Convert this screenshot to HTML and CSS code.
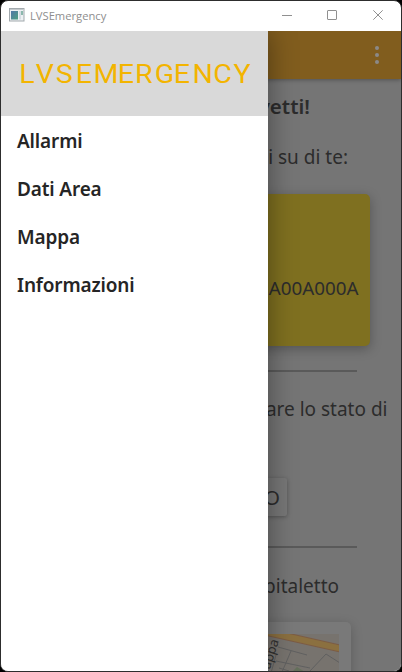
FILE: index.html
```html
<!DOCTYPE html>
<html lang="it">
<head>
<meta charset="utf-8">
<title>LVSEmergency</title>
<link rel="stylesheet" href="styles.css">
</head>
<body>
<div class="window">
  <header class="titlebar">
    <svg class="app-icon" width="16" height="14" viewBox="0 0 16 14">
      <defs><linearGradient id="pane" x1="0" y1="0" x2="1" y2="1"><stop offset="0" stop-color="#5277a8"/><stop offset="1" stop-color="#4fa081"/></linearGradient></defs>
      <rect x=".5" y=".5" width="14.5" height="12.5" fill="#eef1f3" stroke="#a2a9ad"/>
      <path d="M1 1.5h13.5" stroke="#c4c9cc"/>
      <rect x="2" y="3" width="7" height="8.500" fill="url(#pane)"/>
      <rect x="10" y="3" width="2" height="8.500" fill="#d6dde3"/>
      <rect x="12" y="3" width="2" height="4" fill="#8cb8ad"/>
    </svg>
    <span class="app-name">LVSEmergency</span>
    <svg class="controls" width="104" height="12" viewBox="0 0 104 12" fill="none" stroke="#909090">
      <path d="M0 6.500h10"/>
      <rect x="45.500" y="1.500" width="9" height="9" rx=".5"/>
      <path d="M91.300 1.300l9.400 9.400M100.700 1.300l-9.400 9.400"/>
    </svg>
  </header>
  <div class="body">
    <main class="page">
      <div class="appbar"><i></i><i></i><i></i></div>
      <h1 class="greeting">vetti!</h1>
      <p class="about">i su di te:</p>
      <section class="card">A00A000A</section>
      <hr>
      <p class="status">are lo stato di</p>
      <div class="button">O</div>
      <hr class="second">
      <p class="place">pitaletto</p>
      <section class="map-card">
        <svg width="90" height="50" viewBox="0 0 90 50">
          <rect width="90" height="50" fill="#77736e"/>
          <g fill="none" stroke="#606060">
            <path d="M29 13l29 8M42 17l-9 21M27 27l34 7M27 21l-5 18M61 37l16-17 14 9M30 34l10 3"/>
          </g>
          <path d="M43 38l5-5 8 5z" fill="#65705b"/>
          <path d="M9-4L91 14.500" stroke="#7c5c45" stroke-width="8"/>
          <path d="M9-4L91 14.500" stroke="#8b7040" stroke-width="6"/>
          <text class="map-label" transform="translate(17 47) rotate(-72)">Mappa</text>
        </svg>
      </section>
    </main>
    <nav class="drawer">
      <div class="brand">
        <svg width="267" height="85" viewBox="0 0 267 85">
          <text class="wordmark" y="52" transform="scale(1.12 1)" x="16.300 31 48.800 66.800 82.500 104.300 119.700 137.300 154.300 171 189.600 207.600">LVSEMERGENCY</text>
        </svg>
      </div>
      <a>Allarmi</a>
      <a>Dati Area</a>
      <a>Mappa</a>
      <a>Informazioni</a>
    </nav>
  </div>
</div>
</body>
</html>
```
FILE: styles.css
```css
* { box-sizing: border-box; }
body { margin: 0; background: #000; font-family: "Noto Sans", sans-serif; }
.window {
  width: 402px; height: 672px; overflow: hidden;
  border: 1px solid #2d2d2d; border-radius: 8px; background: #fff;
}
.titlebar { height: 30px; display: flex; align-items: center; padding: 0 17px 0 8px; }
.app-icon { margin-top: -2px; }
.app-name { margin: -1px 0 0 5px; font: 11.2px "Open Sans", "Noto Sans", sans-serif; color: #8e8e8e; }
.controls { margin-left: auto; margin-right: -2px; margin-top: -2px; }
.body { position: relative; height: 640px; overflow: hidden; }
.page {
  height: 640px; background: #757575; color: #2c2c2c;
  display: flex; flex-direction: column; align-items: flex-end; white-space: nowrap;
}
.appbar {
  width: 100%; height: 48px; flex: none; background: #815d1e; padding: 15px 22px 0 0;
  box-shadow: 0 1px 4px rgba(0,0,0,.3);
  display: flex; flex-direction: column; align-items: flex-end; gap: 3px;
}
.appbar i { width: 4px; height: 4px; border-radius: 50%; background: #8b8988; }
h1, p { margin: 0; flex: none; line-height: 28px; font-size: 19px; font-weight: 400; }
.greeting { margin: 13px 91px 0 0; font-size: 20.5px; font-weight: 600; }
.about { margin: 23px 53px 0 0; }
.card {
  flex: none; width: 338px; height: 152px; margin: 23px 31px 0 0; padding: 80px 11.5px 0;
  background: #7f7020; border-radius: 5px; box-shadow: 0 3px 12px rgba(0,0,0,.28);
  text-align: right; font-size: 18.8px; line-height: 28px;
}
hr { flex: none; width: 312px; height: 2px; margin: 24px 44px 0 0; border: 0; background: #5a5a5a; }
.status { margin: 23px 13.5px 0 0; }
.button {
  flex: none; width: 172px; height: 38px; margin: 55px 114px 0 0; padding-right: 7px;
  text-align: right; font-size: 20.5px; line-height: 38px; background: #777;
  border-radius: 2px; box-shadow: 0 1px 4px rgba(0,0,0,.3);
}
hr.second { margin-top: 30px; }
.place { margin: 24px 62px 0 0; }
.map-card {
  flex: none; width: 300px; height: 60px; margin: 22px 50px 0 0; padding: 12px 12px 0 0;
  display: flex; justify-content: flex-end; background: #797979;
  border-radius: 5px; box-shadow: 0 3px 12px rgba(0,0,0,.22);
}
.map-label { font: 13px "Noto Sans", sans-serif; fill: #303030; }
.drawer {
  position: absolute; inset: 0 auto 0 0; width: 267px; background: #fff;
  box-shadow: 0 0 26px rgba(0,0,0,.4);
}
.brand { height: 85px; background: #d9d9d9; }
.brand svg { display: block; }
.wordmark { font: 25.500px Roboto, sans-serif; fill: #f3b400; }
.drawer a { display: block; height: 48px; padding-left: 16px; line-height: 50px; font-size: 19px; letter-spacing: -.15px; font-weight: 600; color: #252525; }
```
